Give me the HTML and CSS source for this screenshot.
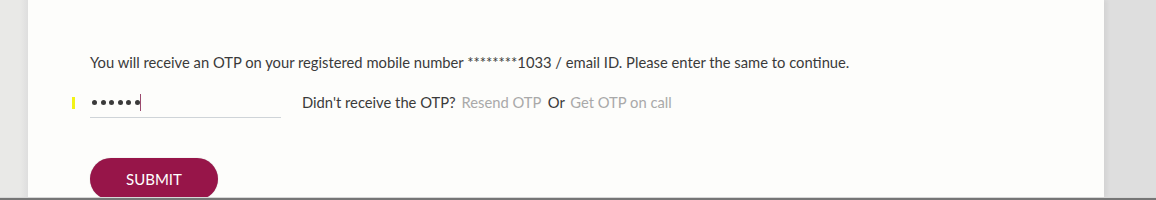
FILE: index.html
```html
<!DOCTYPE html>
<html>
<head>
<meta charset="utf-8">
<link rel="stylesheet" href="styles.css">
</head>
<body>
<div class="page">
  <div class="card">
    <p class="info">You will receive an OTP on your registered mobile number ********1033 / email ID. Please enter the same to continue.</p>
    <div class="otp-row">
      <span class="marker"></span>
      <div class="field">
        <span class="dots"><i></i><i></i><i></i><i></i><i></i><i></i></span><span class="caret"></span>
      </div>
      <div class="resend">
        <span class="dark">Didn't receive the OTP?</span>
        <a class="link">Resend OTP</a>
        <span class="dark or">Or</span>
        <a class="link">Get OTP on call</a>
      </div>
    </div>
    <button class="submit">SUBMIT</button>
  </div>
</div>
<div class="bottom-bar"></div>
</body>
</html>
```

FILE: styles.css
```css
* { box-sizing: border-box; }
html, body { margin: 0; padding: 0; }
body {
  width: 1156px;
  height: 200px;
  overflow: hidden;
  background: #e9e9e7;
  font-family: Lato, "Open Sans", sans-serif;
  color: #3b3b3b;
}
.page {
  height: 197px;
  padding-left: 28px;
  background: linear-gradient(to right, #e9e9e7 0, #e9e9e7 20px, #dedede 28px);
}
.card {
  width: 1076px;
  height: 197px;
  background: #fdfdfb;
  padding: 52px 0 0 62px;
  box-shadow: 3px 0 4px rgba(0,0,0,0.05);
}
.info {
  margin: 0;
  font-size: 14.75px;
  line-height: 20px;
  color: #3a3a3a;
}
.otp-row {
  display: flex;
  align-items: flex-start;
  margin-top: 20px;
  position: relative;
}
.marker {
  position: absolute;
  left: -18px;
  top: 5px;
  width: 3px;
  height: 12px;
  background: #f3f316;
}
.field {
  width: 191px;
  height: 26px;
  border-bottom: 1px solid #cfd4d8;
  display: flex;
  align-items: flex-start;
  padding: 2px 0 0 2px;
}
.dots {
  display: flex;
  gap: 3.5px;
  margin-top: 6px;
}
.dots i {
  display: block;
  width: 5px;
  height: 5px;
  border-radius: 50%;
  background: #3a3a3a;
}
.caret {
  display: inline-block;
  width: 1.5px;
  height: 17px;
  margin-left: 0;
  background: #9b4a6e;
}
.resend {
  margin-left: 21px;
  font-size: 14.75px;
  line-height: 20px;
}
.dark { color: #3a3a3a; }
.link { color: #a9a9a9; margin-left: 2px; }
.or { margin-left: 3px; }
.submit {
  display: block;
  margin-top: 40px;
  width: 128px;
  height: 42px;
  border: none;
  border-radius: 21px;
  background: #971549;
  color: #fff;
  font-family: Lato, sans-serif;
  font-size: 15px;
  padding: 0;
  box-shadow: 0 0 1px rgba(0,0,0,0.3);
}
.bottom-bar {
  height: 3px;
  background: linear-gradient(#d7d7d7 0, #d7d7d7 1px, #767676 1px);
}
```
